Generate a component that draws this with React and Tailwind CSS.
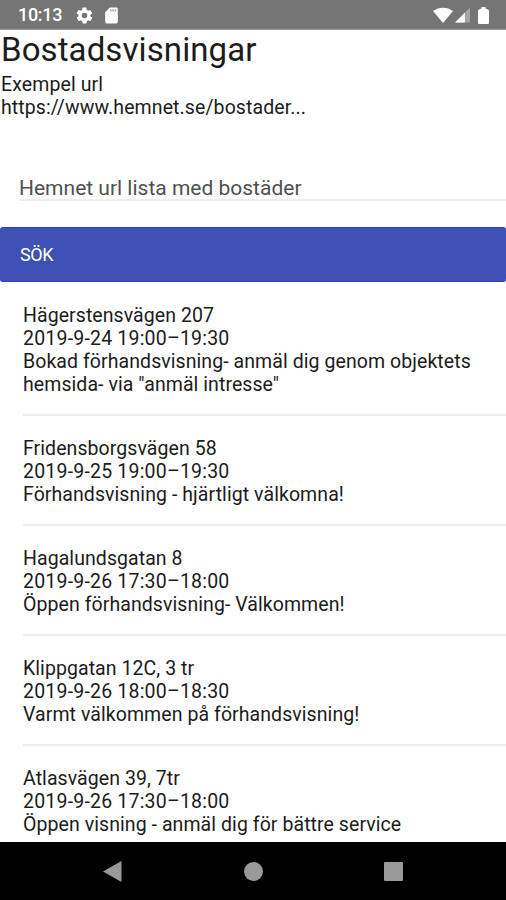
import React from 'react';

const viewings = [
  {
    address: 'Hägerstensvägen 207',
    time: '2019-9-24 19:00–19:30',
    lines: ['Bokad förhandsvisning- anmäl dig genom objektets', 'hemsida- via "anmäl intresse"'],
  },
  { address: 'Fridensborgsvägen 58', time: '2019-9-25 19:00–19:30', lines: ['Förhandsvisning - hjärtligt välkomna!'] },
  { address: 'Hagalundsgatan 8', time: '2019-9-26 17:30–18:00', lines: ['Öppen förhandsvisning- Välkommen!'] },
  { address: 'Klippgatan 12C, 3 tr', time: '2019-9-26 18:00–18:30', lines: ['Varmt välkommen på förhandsvisning!'] },
  { address: 'Atlasvägen 39, 7tr', time: '2019-9-26 17:30–18:00', lines: ['Öppen visning - anmäl dig för bättre service'] },
];

function StatusBar() {
  return (
    <header className="flex h-[30px] shrink-0 items-center border-b border-[#9a9a9a] bg-[#757575] pt-px pr-[17px] pl-[18px] text-white">
      <span className="w-[57px] text-[18px] leading-none font-medium tracking-[-0.3px]">10:13</span>
      <svg className="h-[19px] w-[19px]" viewBox="0 0 24 24" fill="currentColor">
        <path d="M19.4 13a7.8 7.8 0 0 0 0-2l2.1-1.6a.5.5 0 0 0 .1-.7l-2-3.4a.5.5 0 0 0-.6-.2l-2.5 1a7.3 7.3 0 0 0-1.7-1l-.4-2.6a.5.5 0 0 0-.5-.5h-4a.5.5 0 0 0-.5.5L9 5.1a7.3 7.3 0 0 0-1.7 1l-2.5-1a.5.5 0 0 0-.6.2l-2 3.4a.5.5 0 0 0 .1.7L4.5 11a7.8 7.8 0 0 0 0 2l-2.1 1.6a.5.5 0 0 0-.1.7l2 3.4a.5.5 0 0 0 .6.2l2.5-1a7.3 7.3 0 0 0 1.7 1l.4 2.6a.5.5 0 0 0 .5.5h4a.5.5 0 0 0 .5-.5l.4-2.6a7.3 7.3 0 0 0 1.7-1l2.5 1a.5.5 0 0 0 .6-.2l2-3.4a.5.5 0 0 0-.1-.7zM12 15.5a3.5 3.5 0 1 1 0-7 3.5 3.5 0 0 1 0 7z" />
      </svg>
      <svg className="ml-[8px] h-[19px] w-[19px]" viewBox="0 0 24 24" fill="currentColor">
        <path d="M18 2h-8L4 8v12c0 1.1.9 2 2 2h12c1.1 0 2-.9 2-2V4c0-1.1-.9-2-2-2z" />
        <path d="M10 4h2v3h-2zm3 0h2v3h-2zm3 0h2v3h-2z" fill="#757575" opacity=".6" />
      </svg>
      <div className="ml-auto flex items-center">
        <svg className="h-[16px] w-[20px]" viewBox="0 0 20 16" fill="currentColor">
          <path d="M0 4C6-.5 14-.5 20 4L10 16z" />
        </svg>
        <svg className="ml-[2px] h-[16px] w-[15px]" viewBox="0 0 16 16" fill="currentColor">
          <path d="M0 16 16 0v16z" opacity=".35" />
          <path d="M0 16 10.500 5.500v10.500z" />
        </svg>
        <svg className="ml-[8px] h-[17px] w-[11px]" viewBox="0 0 11 17" fill="currentColor">
          <path d="M3.500 0h4v1.500L10 2.500q1 .5 1 1.500v12q0 1-1 1H1q-1 0-1-1V4q0-1 1-1.500l2.500-1z" />
        </svg>
      </div>
    </header>
  );
}

function Viewing({ address, time, lines }) {
  return (
    <li className="ml-[23px] border-b-2 border-[#eeeeee] pt-[21px] pb-[18px] text-[19.5px] leading-[23px] tracking-[0.07px] whitespace-nowrap first:pt-[22px] last:border-0">
      <p>{address}</p>
      <p className="tracking-[0.2px]">{time}</p>
      {lines.map((line) => (
        <p key={line}>{line}</p>
      ))}
    </li>
  );
}

function NavBar() {
  return (
    <nav className="flex h-[58px] shrink-0 items-center bg-black pl-[103px] text-[#999999]">
      <svg className="h-[21px] w-[19px]" viewBox="0 0 19 21" fill="currentColor">
        <path d="M0 10.500 18.500 0v21z" />
      </svg>
      <div className="ml-[122px] h-[19px] w-[19px] rounded-full bg-[#999999]" />
      <div className="ml-[121px] h-[19px] w-[19px] rounded-[1px] bg-[#999999]" />
    </nav>
  );
}

export default function App() {
  return (
    <div className="flex h-[900px] w-[506px] flex-col overflow-hidden bg-white font-[Roboto,sans-serif] text-[#1c1c1c]">
      <StatusBar />
      <main className="min-h-0 flex-1 overflow-hidden">
        <h1 className="pl-px text-[33px] leading-[40px] tracking-[0.1px]">Bostadsvisningar</h1>
        <p className="mt-[3px] pl-px text-[19.5px] leading-[23px] tracking-[0.1px] whitespace-nowrap">
          Exempel url
          <br />
          https://www.hemnet.se/bostader...
        </p>
        <div className="mt-[57px] ml-[19px] h-[25px] border-b-2 border-[#eeeeee] text-[21px] leading-[24px] text-[#505050]">
          Hemnet url lista med bostäder
        </div>
        <button className="mt-[26px] flex h-[55px] w-full items-center rounded-[3px] border-y border-[#2f40ac] bg-[#3f51b5] pl-5 text-[18px] tracking-[-0.4px] text-white">
          SÖK
        </button>
        <ul>
          {viewings.map((viewing) => (
            <Viewing key={viewing.address} {...viewing} />
          ))}
        </ul>
      </main>
      <NavBar />
    </div>
  );
}
